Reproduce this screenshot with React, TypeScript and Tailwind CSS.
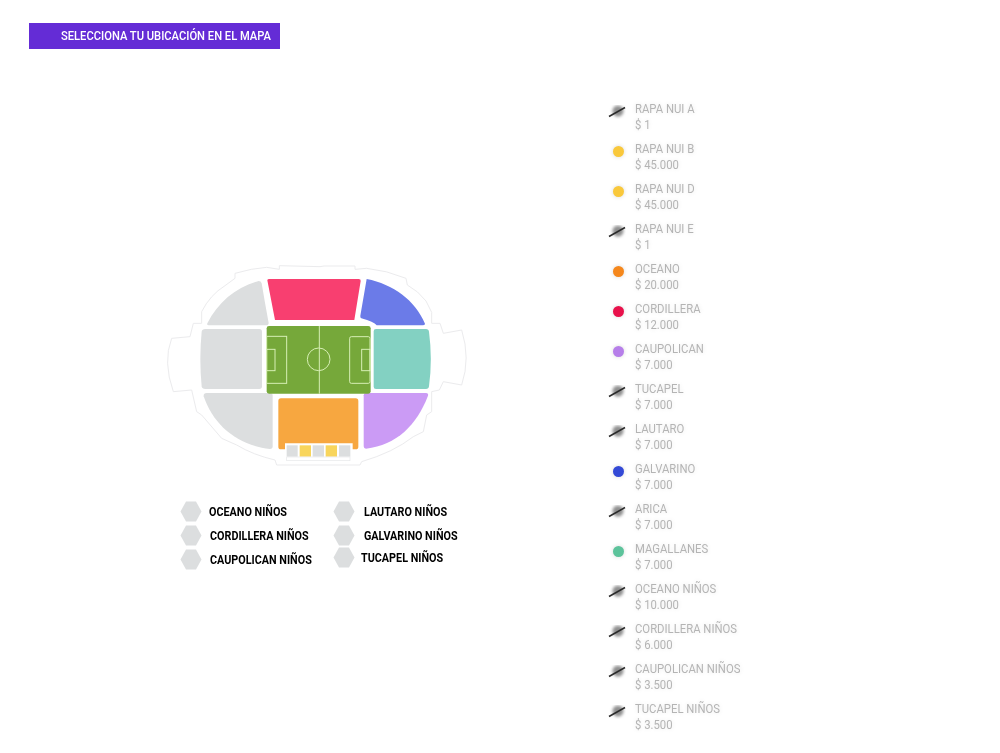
const sectors = [
  { name: "RAPA NUI A", price: "$ 1" },
  { name: "RAPA NUI B", price: "$ 45.000", color: "bg-[#f9c83b]" },
  { name: "RAPA NUI D", price: "$ 45.000", color: "bg-[#f9c83b]" },
  { name: "RAPA NUI E", price: "$ 1" },
  { name: "OCEANO", price: "$ 20.000", color: "bg-[#f5871c]" },
  { name: "CORDILLERA", price: "$ 12.000", color: "bg-[#e8114b]" },
  { name: "CAUPOLICAN", price: "$ 7.000", color: "bg-[#b67ee9]" },
  { name: "TUCAPEL", price: "$ 7.000" },
  { name: "LAUTARO", price: "$ 7.000" },
  { name: "GALVARINO", price: "$ 7.000", color: "bg-[#3349d6]" },
  { name: "ARICA", price: "$ 7.000" },
  { name: "MAGALLANES", price: "$ 7.000", color: "bg-[#5cc39b]" },
  { name: "OCEANO NIÑOS", price: "$ 10.000" },
  { name: "CORDILLERA NIÑOS", price: "$ 6.000" },
  { name: "CAUPOLICAN NIÑOS", price: "$ 3.500" },
  { name: "TUCAPEL NIÑOS", price: "$ 3.500" },
];

function SoldOutIcon() {
  return (
    <svg width="18" height="14" viewBox="0 0 18 14" className="ml-[-2px] mt-[4px]">
      <defs>
        <filter id="soft" x="-50%" y="-50%" width="200%" height="200%">
          <feGaussianBlur stdDeviation="1.4" />
        </filter>
      </defs>
      <circle cx="10" cy="6" r="5.5" fill="#8f8f8f" filter="url(#soft)" />
      <line x1="1" y1="11.5" x2="17" y2="2.5" stroke="#2b2b2b" strokeWidth="1.5" />
    </svg>
  );
}

function Hexagon() {
  return (
    <svg width="22" height="21" viewBox="0 0 22 21" className="shrink-0">
      <polygon points="6,0.5 16,0.5 21.5,10.5 16,20.5 6,20.5 0.5,10.5" fill="#dcdedf" />
    </svg>
  );
}

function StadiumMap() {
  return (
    <svg width="320" height="220" viewBox="0 0 960 660" className="ml-[160px] mt-[206px] block">
      {/* Outer ring */}
      <path
        d="M358 43 L358 32 L480 35 L492 33 L585 33 L585 43 L620 40 Q680 46 738 70 L742 90 Q775 108 798 138 L815 172 L815 205 L840 205 L850 235 L905 225 Q932 310 905 390 L850 380 L838 405 L815 410 L815 470 L800 480 L790 530 L760 545 Q700 592 605 620 L600 630 L350 630 L345 615 Q280 600 230 570 L185 550 L125 480 L110 470 L95 405 L40 410 Q8 320 35 250 L90 245 L100 205 L125 205 L125 170 Q150 120 195 92 L225 70 L225 55 Q275 40 320 37 Z"
        fill="none"
        stroke="#ebebed"
        strokeWidth="3"
      />
      {/* Sectors */}
      <path d="M322 76 Q322 72 328 72 L596 72 Q603 72 602 78 L583 195 L345 195 Z" fill="#f83f70" />
      <path d="M620 72 C700 88 765 135 795 206 Q795 211 788 211 L650 211 Q642 200 604 190 Q600 188 601 182 Z" fill="#6b7be8" />
      <path d="M648 222 L798 222 Q806 222 807 230 Q818 312 807 394 Q806 402 798 402 L648 402 Q641 402 641 395 L641 229 Q641 222 648 222 Z" fill="#83d1c2" />
      <path d="M618 414 L798 414 Q806 414 804 422 C770 510 710 570 618 581 Q611 581 611 574 L611 421 Q611 414 618 414 Z" fill="#cb9bf5" />
      <path d="M363 430 L587 430 Q595 430 595 438 L595 575 Q595 583 587 583 L578 583 L578 565 L375 565 L375 583 L363 583 Q355 583 355 575 L355 438 Q355 430 363 430 Z" fill="#f7a740" />
      <path d="M142 205 C175 140 230 95 296 78 Q303 78 305 85 Q314 140 326 204 Q326 211 318 211 L146 211 Q140 211 142 205 Z" fill="#dcdedf" />
      <path d="M136 222 L298 222 Q306 222 306 230 L306 394 Q306 402 298 402 L136 402 Q126 402 125 394 Q117 312 125 230 Q126 222 136 222 Z" fill="#dcdedf" />
      <path d="M140 414 L330 414 Q338 414 338 422 L338 574 Q338 582 330 582 C230 570 160 510 131 424 Q130 414 140 414 Z" fill="#dcdedf" />
      {/* Small sectors under Oceano */}
      <rect x="380" y="571" width="33" height="34" fill="#dcdedf" />
      <rect x="419" y="571" width="34" height="34" fill="#f8d55c" />
      <rect x="458" y="571" width="34" height="34" fill="#dcdedf" />
      <rect x="497" y="571" width="34" height="34" fill="#f8d55c" />
      <rect x="537" y="571" width="34" height="34" fill="#dcdedf" />
      <rect x="380" y="606" width="190" height="11" fill="none" stroke="#e6e7e9" strokeWidth="2" />
      {/* Pitch */}
      <rect x="320" y="213" width="312" height="203" rx="7" fill="#76a83a" />
      <g fill="none" stroke="#d7efb5" strokeWidth="3">
        <line x1="478" y1="213" x2="478" y2="416" />
        <circle cx="476" cy="313" r="34" />
        <rect x="320" y="244" width="60" height="141" />
        <rect x="320" y="283" width="25" height="64" />
        <rect x="569" y="245" width="61" height="140" rx="5" />
        <rect x="605" y="283" width="25" height="64" />
      </g>
    </svg>
  );
}

function LegendItem({ label, offset }: { label: string; offset: string }) {
  return (
    <div className={"flex items-center " + offset}>
      <Hexagon />
      <span className="origin-left scale-x-[0.83] whitespace-nowrap text-[13px] font-bold leading-[14px] text-black">{label}</span>
    </div>
  );
}

export default function App() {
  return (
    <div className="flex h-[753px] w-[1000px] overflow-hidden bg-white font-['Roboto',sans-serif]">
      <div className="w-[610px] shrink-0">
        <div className="ml-[29px] mt-[23px] flex h-[26px] w-[251px] items-center overflow-hidden bg-[#642cd6] pl-[32px] text-[13px] font-medium text-white">
          <span className="origin-left scale-x-[0.86] whitespace-nowrap">SELECCIONA TU UBICACIÓN EN EL MAPA</span>
        </div>
        <StadiumMap />
        <div className="ml-[180px] mt-[26px] flex">
          <div className="flex w-[153px] flex-col gap-[3px]">
            <LegendItem label="OCEANO NIÑOS" offset="gap-[7px]" />
            <LegendItem label="CORDILLERA NIÑOS" offset="gap-[8px]" />
            <LegendItem label="CAUPOLICAN NIÑOS" offset="gap-[8px]" />
          </div>
          <div className="flex flex-col gap-[3px]">
            <LegendItem label="LAUTARO NIÑOS" offset="gap-[9px]" />
            <LegendItem label="GALVARINO NIÑOS" offset="gap-[9px]" />
            <LegendItem label="TUCAPEL NIÑOS" offset="mt-[-2px] gap-[6px]" />
          </div>
        </div>
      </div>
      <div className="flex flex-col gap-[8px] pt-[101px]">
        {sectors.map((s) => (
          <div key={s.name} className="flex h-[32px]">
            <div className="w-[25px] shrink-0">
              {s.color ? (
                <div className={"ml-[2.5px] mt-[4.5px] h-[11px] w-[11px] rounded-full shadow-[0_0_4px_rgba(0,0,0,0.15)] " + s.color} />
              ) : (
                <SoldOutIcon />
              )}
            </div>
            <div className="origin-left scale-x-[0.87] text-[13px] leading-[16px] text-[#b4b4b4] [text-shadow:0_0_6px_rgba(0,0,0,0.12)]">
              <div className="whitespace-nowrap">{s.name}</div>
              <div className="whitespace-nowrap">{s.price}</div>
            </div>
          </div>
        ))}
      </div>
    </div>
  );
}
